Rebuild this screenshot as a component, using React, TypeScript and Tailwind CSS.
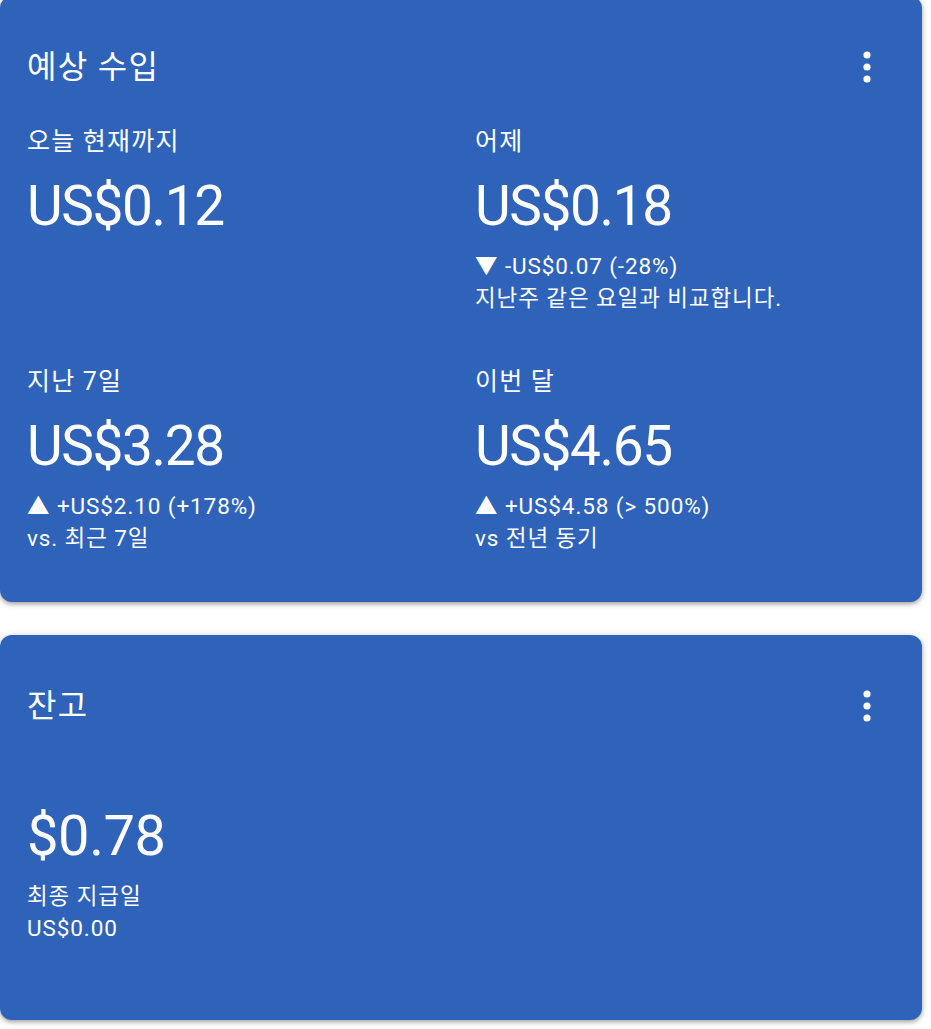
import React from "react";

const FONT = "font-['Roboto','Noto_Sans_CJK_KR',sans-serif]";

function Dots() {
  return (
    <svg width="8" height="32" viewBox="0 0 8 32" className="mr-[24px]" aria-hidden>
      <circle cx="4" cy="4" r="3.6" fill="white" />
      <circle cx="4" cy="16" r="3.6" fill="white" />
      <circle cx="4" cy="28" r="3.6" fill="white" />
    </svg>
  );
}

function Header({ title }: { title: string }) {
  return (
    <div className="flex h-10 items-center justify-between">
      <h2 className="text-[32px] leading-10 font-normal tracking-[1.3px]">{title}</h2>
      <Dots />
    </div>
  );
}

function Stat({
  label,
  value,
  lines,
}: {
  label: string;
  value: string;
  lines?: string[];
}) {
  return (
    <div className="flex flex-col">
      <div className="text-[25px] leading-8 tracking-[1.2px]">{label}</div>
      <div className="mt-4 text-[55px] leading-[64px] tracking-[-1.4px]">{value}</div>
      {lines && (
        <div className="mt-3 text-[22.5px] leading-8 tracking-[0.9px]">
          {lines.map((l) => (
            <div key={l}>{l}</div>
          ))}
        </div>
      )}
    </div>
  );
}

export default function App() {
  return (
    <div className={`${FONT} min-h-[1029px] w-[931px] overflow-hidden bg-white text-white`}>
      <div className="-mt-1 flex w-[922px] flex-col gap-[33px]">
        <section className="rounded-[12px] bg-[#2f63b9] px-[27px] pt-[51px] pb-[48px] shadow-[0_2px_4px_rgba(0,0,0,0.3),0_1px_8px_rgba(0,0,0,0.12)]">
          <Header title="예상 수입" />
          <div className="mt-[39px] grid grid-cols-2 gap-x-7 gap-y-[52px]">
            <Stat label="오늘 현재까지" value="US$0.12" />
            <Stat
              label="어제"
              value="US$0.18"
              lines={["▼ -US$0.07 (-28%)", "지난주 같은 요일과 비교합니다."]}
            />
            <Stat
              label="지난 7일"
              value="US$3.28"
              lines={["▲ +US$2.10 (+178%)", "vs. 최근 7일"]}
            />
            <Stat
              label="이번 달"
              value="US$4.65"
              lines={["▲ +US$4.58 (> 500%)", "vs 전년 동기"]}
            />
          </div>
        </section>

        <section className="rounded-[12px] bg-[#2f63b9] px-[27px] pt-[51px] pb-[76px] shadow-[0_2px_4px_rgba(0,0,0,0.3),0_1px_8px_rgba(0,0,0,0.12)]">
          <Header title="잔고" />
          <div className="mt-[78px] text-[56px] leading-[64px] tracking-[-0.4px]">$0.78</div>
          <div className="mt-3 text-[22.5px] leading-8 tracking-[0.9px]">
            <div>최종 지급일</div>
            <div>US$0.00</div>
          </div>
        </section>
      </div>
    </div>
  );
}
